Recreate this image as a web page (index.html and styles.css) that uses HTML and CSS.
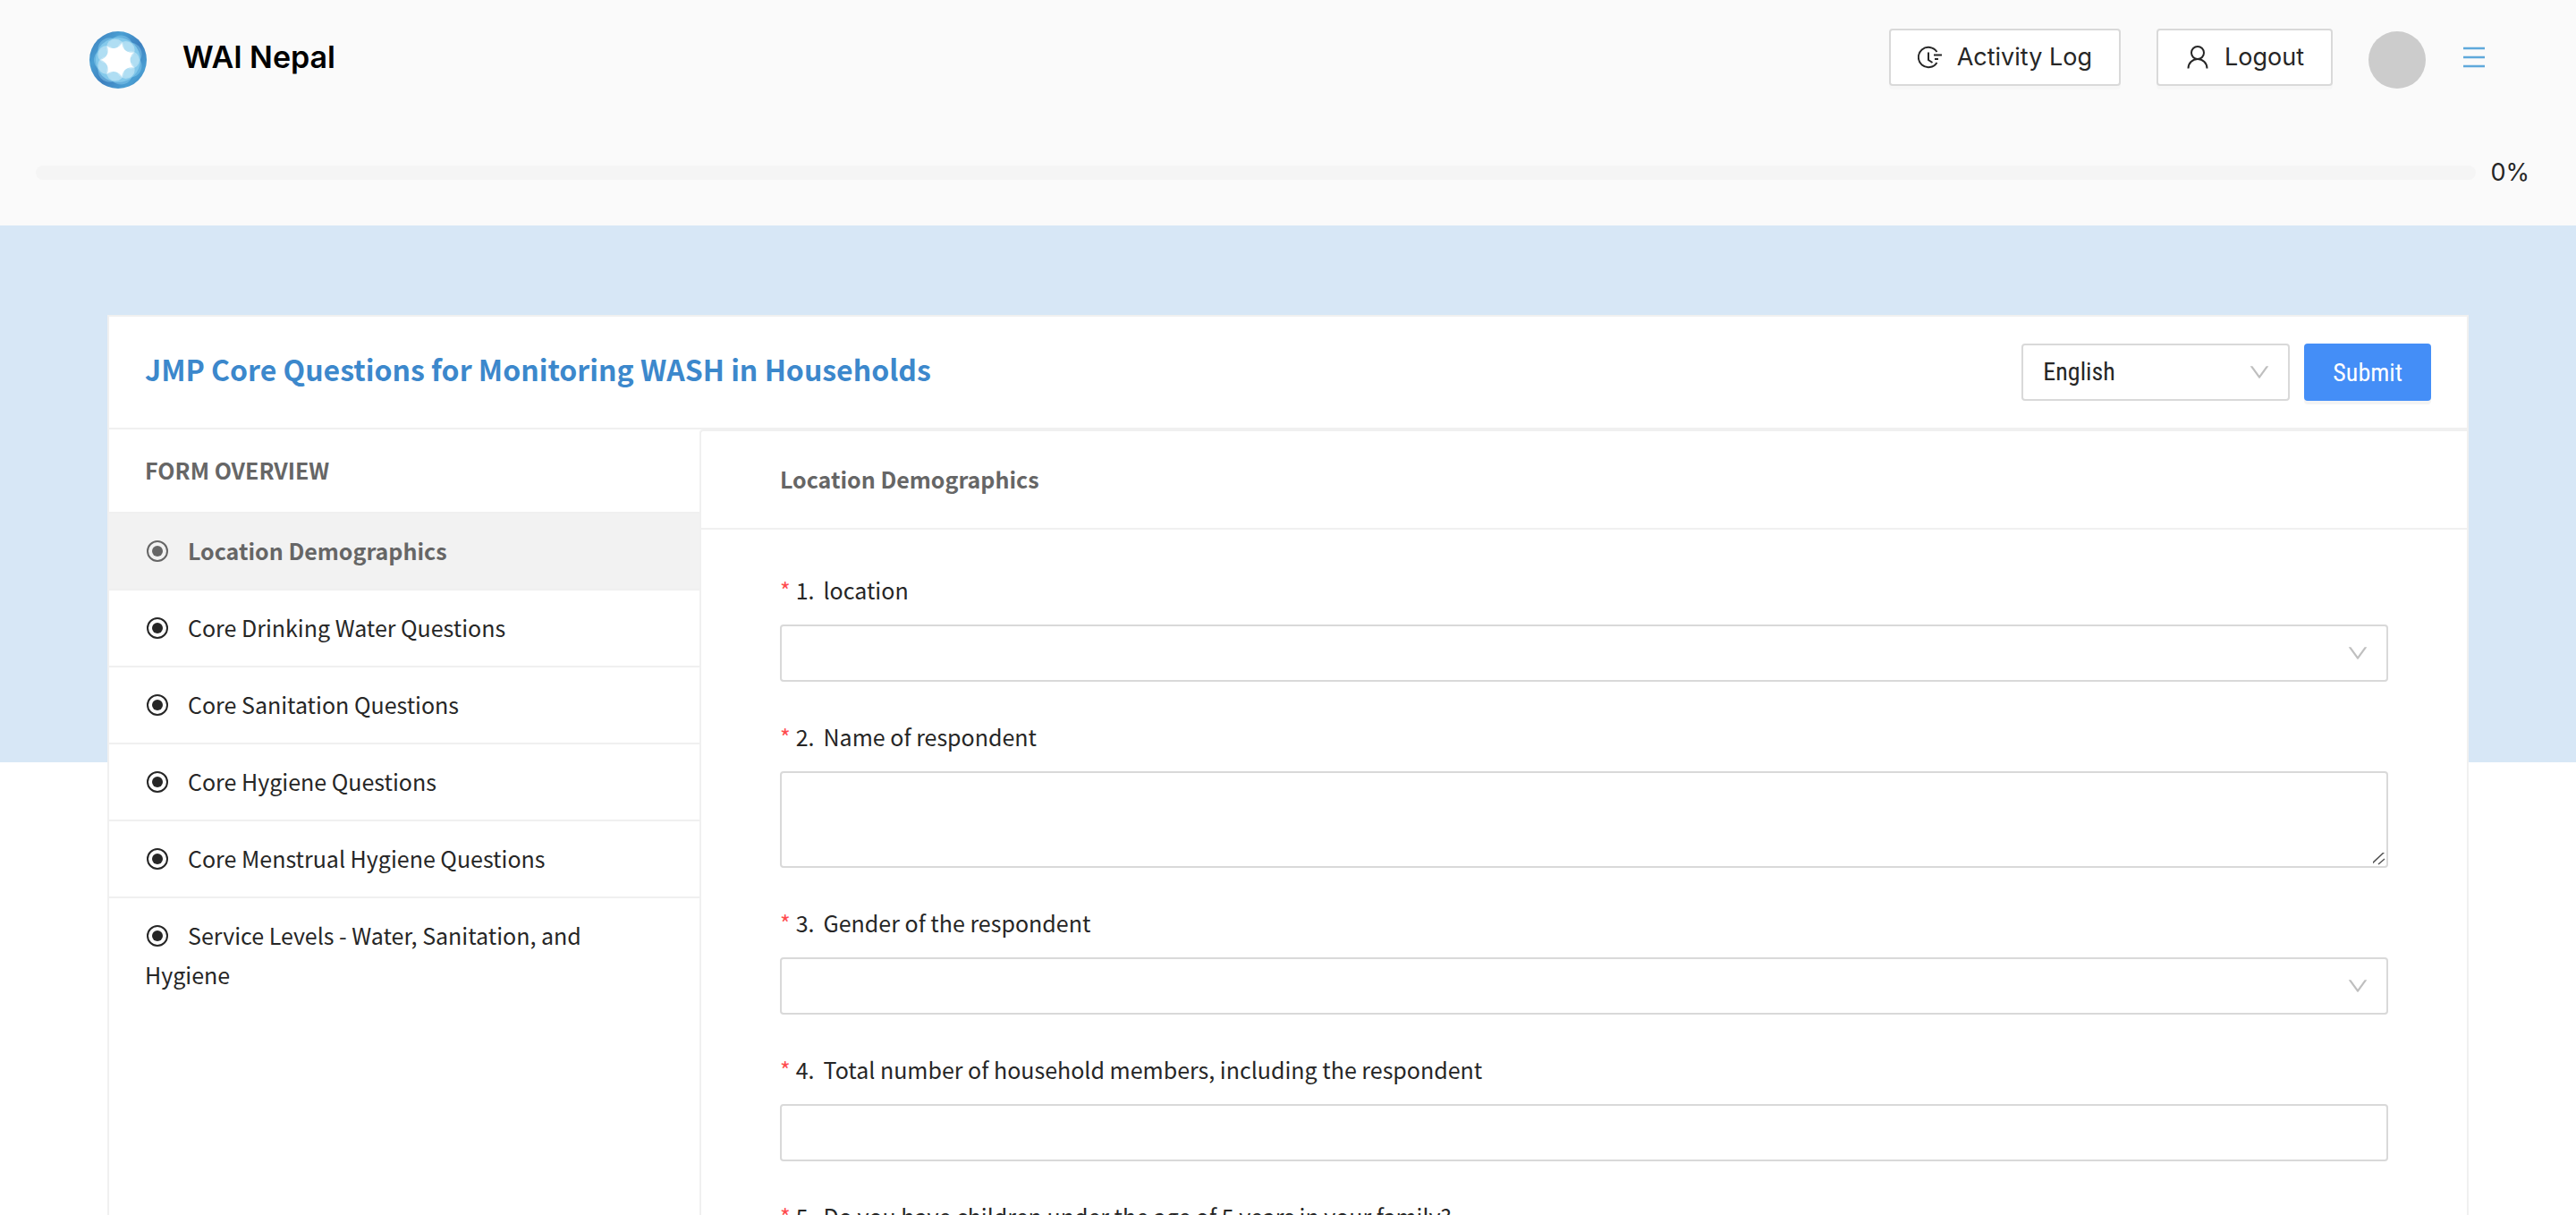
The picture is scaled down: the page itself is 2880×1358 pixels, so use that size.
FILE: index.html
```html
<!DOCTYPE html>
<html lang="en">
<head>
<meta charset="utf-8">
<title>WAI Nepal</title>
<meta name="viewport" content="width=device-width, initial-scale=1">
<link rel="stylesheet" href="styles.css">
</head>
<body>
<svg class="sprite" aria-hidden="true">
  <symbol id="down" viewBox="64 64 896 896"><path d="M884 256h-75c-5.100 0-9.900 2.500-12.900 6.600L512 654.200 227.900 262.600c-3-4.100-7.800-6.600-12.900-6.600h-75c-6.500 0-10.300 7.400-6.500 12.700l352.600 486.100c12.800 17.600 39 17.600 51.700 0l352.600-486.100c3.900-5.300.1-12.700-6.400-12.700z"/></symbol>
  <symbol id="dot" viewBox="0 0 28 28"><circle cx="14" cy="14" r="11" fill="none" stroke="currentColor" stroke-width="2"/><circle cx="14" cy="14" r="6"/></symbol>
</svg>

<header class="topbar">
  <div class="topbar-row">
    <a class="brand" href="#">
      <svg class="logo" viewBox="0 0 64 64" aria-hidden="true">
        <defs>
          <linearGradient id="rim" x1="0" y1="0" x2="1" y2="1">
            <stop offset="0" stop-color="#3a78b8"/><stop offset=".3" stop-color="#4a9fd3"/>
            <stop offset=".55" stop-color="#3d80bf"/><stop offset=".8" stop-color="#4a9fd3"/>
            <stop offset="1" stop-color="#3a78b8"/>
          </linearGradient>
        </defs>
        <circle cx="32" cy="32" r="32" fill="url(#rim)"/>
        <circle cx="32" cy="32" r="25" fill="#7cc3e8"/>
        <g fill="#8fd0f0" fill-opacity=".45">
          <circle cx="17" cy="32" r="12"/><circle cx="22.600" cy="20.300" r="13"/><circle cx="35.300" cy="17.400" r="13"/>
          <circle cx="45.500" cy="25.500" r="13"/><circle cx="45.500" cy="38.500" r="13"/><circle cx="35.300" cy="46.600" r="13"/>
          <circle cx="22.600" cy="43.700" r="13"/>
        </g>
        <g fill="#d8effa" fill-opacity=".5">
          <circle cx="19.400" cy="26" r="10"/><circle cx="28.900" cy="18.400" r="10"/><circle cx="40.700" cy="21.100" r="10"/>
          <circle cx="46" cy="32" r="10"/><circle cx="40.700" cy="42.900" r="10"/><circle cx="28.900" cy="45.600" r="10"/>
          <circle cx="19.400" cy="38" r="10"/>
        </g>
        <path fill="#fff" d="M12.500 32A11 11 0 0 0 19.800 16.800A11 11 0 0 0 36.300 13A11 11 0 0 0 49.600 23.500A11 11 0 0 0 49.600 40.500A11 11 0 0 0 36.300 51A11 11 0 0 0 19.800 47.200A11 11 0 0 0 12.500 32z"/>
      </svg>
      <span>WAI Nepal</span>
    </a>
    <div class="actions">
      <button class="btn" type="button">
        <svg viewBox="0 0 28 28" fill="none" stroke="currentColor" stroke-width="2" aria-hidden="true"><path d="M21.500 8A11.200 11.200 0 1 0 21.500 20M12 8.500v8.500l4.500 3M18 11.500h9M19 16h4"/></svg>
        Activity Log
      </button>
      <button class="btn" type="button">
        <svg viewBox="0 0 28 28" fill="none" stroke="currentColor" stroke-width="2" aria-hidden="true"><circle cx="14" cy="9" r="7"/><path d="M3.500 26.500a10.500 10.500 0 0 1 21 0"/></svg>
        Logout
      </button>
      <span class="avatar"></span>
      <button class="menu" type="button" aria-label="Menu">
        <svg viewBox="0 0 28 28" stroke="currentColor" stroke-width="2.500" aria-hidden="true"><path d="M2 4h24M2 14h24M2 24h24"/></svg>
      </button>
    </div>
  </div>
  <div class="progress">
    <div class="track" role="progressbar" aria-label="Form progress" aria-valuenow="0" aria-valuemin="0" aria-valuemax="100"></div>
    <span>0%</span>
  </div>
</header>

<main class="page">
  <div class="card">
    <div class="card-head">
      <h1>JMP Core Questions for Monitoring WASH in Households</h1>
      <div class="card-tools">
        <div class="select language">
          <select aria-label="Language"><option>English</option><option>Nepali</option></select>
          <svg aria-hidden="true"><use href="#down"/></svg>
        </div>
        <button class="submit" type="submit" form="survey">Submit</button>
      </div>
    </div>
    <div class="card-body">
      <nav class="overview" aria-label="Form overview">
        <h2>FORM OVERVIEW</h2>
        <ul>
          <li class="active"><a href="#"><svg aria-hidden="true"><use href="#dot"/></svg>Location Demographics</a></li>
          <li><a href="#"><svg aria-hidden="true"><use href="#dot"/></svg>Core Drinking Water Questions</a></li>
          <li><a href="#"><svg aria-hidden="true"><use href="#dot"/></svg>Core Sanitation Questions</a></li>
          <li><a href="#"><svg aria-hidden="true"><use href="#dot"/></svg>Core Hygiene Questions</a></li>
          <li><a href="#"><svg aria-hidden="true"><use href="#dot"/></svg>Core Menstrual Hygiene Questions</a></li>
          <li><a href="#"><svg aria-hidden="true"><use href="#dot"/></svg>Service Levels - Water, Sanitation, and Hygiene</a></li>
        </ul>
      </nav>
      <form class="survey" id="survey">
        <h2>Location Demographics</h2>
        <div class="fields">
          <div class="field">
            <label for="q1"><span class="req">*</span><span class="num">1.</span>location</label>
            <div class="select"><select id="q1"><option></option></select><svg aria-hidden="true"><use href="#down"/></svg></div>
          </div>
          <div class="field">
            <label for="q2"><span class="req">*</span><span class="num">2.</span>Name of respondent</label>
            <textarea id="q2"></textarea>
          </div>
          <div class="field">
            <label for="q3"><span class="req">*</span><span class="num">3.</span>Gender of the respondent</label>
            <div class="select"><select id="q3"><option></option></select><svg aria-hidden="true"><use href="#down"/></svg></div>
          </div>
          <div class="field">
            <label for="q4"><span class="req">*</span><span class="num">4.</span>Total number of household members, including the respondent</label>
            <input id="q4" type="text">
          </div>
          <div class="field">
            <label for="q5"><span class="req">*</span><span class="num">5.</span>Do you have children under the age of 5 years in your family?</label>
            <div class="select"><select id="q5"><option></option></select><svg aria-hidden="true"><use href="#down"/></svg></div>
          </div>
        </div>
      </form>
    </div>
  </div>
</main>
</body>
</html>
```
FILE: styles.css
```css
* { box-sizing: border-box; }

html { scrollbar-width: none; }

body {
  margin: 0;
  background: #fff;
  color: #262626;
  font-family: "Noto Sans CJK SC", "Noto Sans", sans-serif;
  font-size: 25px;
  line-height: 44px;
}

h1, h2, ul { margin: 0; padding: 0; }
ul { list-style: none; }
a { color: inherit; text-decoration: none; }
svg { fill: currentColor; }
.sprite { display: none; }

.topbar {
  padding-bottom: 37px;
  background: #fafafa;
  font-family: Inter, sans-serif;
  font-size: 27px;
}
.topbar-row {
  display: flex;
  justify-content: space-between;
  padding: 32px 100px 0;
}
.brand {
  display: flex;
  gap: 40px;
  color: #000;
  font-size: 34px;
  font-weight: 600;
  line-height: 64px;
}
.logo { width: 64px; height: 64px; margin-top: 3px; }
.actions { display: flex; align-items: flex-start; gap: 40px; }
.btn {
  display: flex;
  align-items: center;
  gap: 16px;
  height: 64px;
  padding: 0 30px;
  border: 2px solid #d9d9d9;
  border-radius: 4px;
  background: #fff;
  box-shadow: 0 4px 0 rgba(0, 0, 0, .016);
  color: #262626;
  font: inherit;
}
.btn svg, .menu svg { width: 28px; height: 28px; fill: none; }
.avatar { width: 64px; height: 64px; margin-top: 3px; border-radius: 50%; background: #ccc; }
.menu {
  display: flex;
  align-items: center;
  height: 64px;
  padding: 0;
  border: 0;
  background: none;
  color: #5fa9db;
}
.progress {
  display: flex;
  align-items: center;
  gap: 16px;
  padding: 72px 52px 0 40px;
}
.track { flex: 1; height: 16px; border-radius: 8px; background: #f5f5f5; }

.page {
  padding: 100px 120px 0;
  background: linear-gradient(#d7e7f6, #d7e7f6) no-repeat 0 0 / 100% 600px;
}
.card { border: 2px solid #f0f0f0; background: #fff; }
.card-head {
  display: flex;
  justify-content: space-between;
  align-items: flex-start;
  padding: 30px 40px;
  border-bottom: 2px solid #f0f0f0;
}
.card-head h1 {
  color: #3c88cc;
  font-size: 32px;
  font-weight: 700;
  line-height: 56px;
}
.card-tools { display: flex; gap: 16px; }

.select { display: grid; }
.select > * { grid-area: 1 / 1; }
.select svg {
  width: 24px;
  height: 24px;
  margin-right: 22px;
  align-self: center;
  justify-self: end;
  color: #bfbfbf;
  pointer-events: none;
}
select, input, textarea {
  width: 100%;
  height: 64px;
  padding: 0 22px;
  border: 2px solid #d9d9d9;
  border-radius: 4px;
  background: #fff;
  color: #262626;
  font: inherit;
  appearance: none;
}
textarea { display: block; height: 108px; resize: vertical; }
textarea::-webkit-scrollbar { width: 20px; height: 20px; }
textarea::-webkit-resizer {
  background: url("data:image/svg+xml,%3Csvg xmlns='http://www.w3.org/2000/svg' width='20' height='20'%3E%3Cpath d='M3 18L18 4M11 18L18 12' stroke='%23555' stroke-width='1.500'/%3E%3C/svg%3E") no-repeat 100% 100%;
}

.language { width: 300px; }
.language select, .submit {
  font-family: "Roboto Condensed", "Liberation Sans Narrow", Roboto, sans-serif;
  font-size: 28px;
}
.submit {
  height: 64px;
  padding: 0 32px;
  border: 0;
  border-radius: 4px;
  background: #448ef7;
  box-shadow: 0 4px 0 rgba(0, 0, 0, .045);
  color: #fff;
}

.card-body { display: flex; }
.overview { flex: 0 0 660px; }
.overview h2, .survey h2 { color: #666; font-size: 25px; font-weight: 700; }
.overview h2 { padding: 23px 40px 25px; border-bottom: 2px solid #f0f0f0; }
.overview a { display: block; padding: 19px 40px 21px; }
.overview li + li a { border-top: 2px solid #f0f0f0; }
.overview svg { width: 28px; height: 28px; margin-right: 20px; vertical-align: -4px; }
.overview .active { background: #f2f2f2; color: #666; font-weight: 700; }

.survey {
  flex: 1;
  border-top: 2px solid #f0f0f0;
  border-left: 2px solid #f0f0f0;
  border-top-left-radius: 4px;
}
.survey h2 { padding: 31px 88px 33px; border-bottom: 2px solid #f0f0f0; }
.fields { display: grid; gap: 40px; padding: 46px 88px 40px; }
.field { display: grid; gap: 18px; }
.field label { display: flex; gap: 6px; line-height: 42px; }
.num { margin-right: 4px; }
.req { color: #ff4d4f; }
```
